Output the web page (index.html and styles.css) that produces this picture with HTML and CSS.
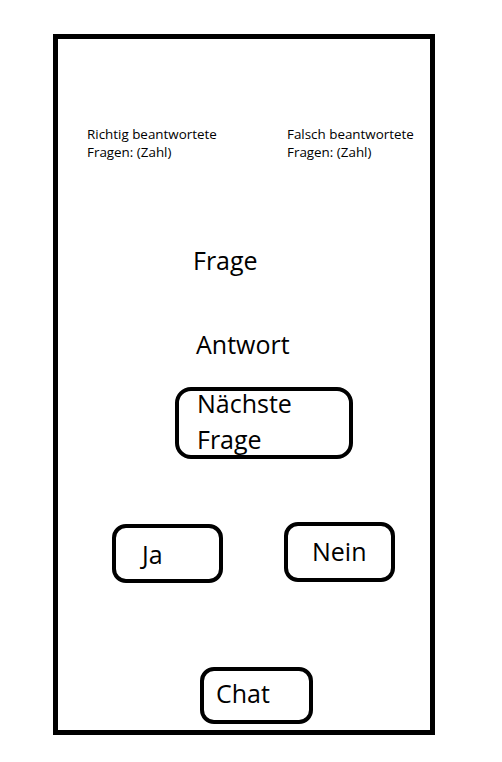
FILE: index.html
```html
<!DOCTYPE html>
<html lang="de">
<head>
    <meta charset="UTF-8">
    <meta name="viewport" content="width=device-width, initial-scale=1.0">
    <title>Quiz</title>
    <link rel="stylesheet" href="styles.css">
</head>
<body>
    <div class="phone">
        <div class="stats">
            <div class="stat">Richtig beantwortete<br>Fragen: (Zahl)</div>
            <div class="stat">Falsch beantwortete<br>Fragen: (Zahl)</div>
        </div>

        <div class="question">Frage</div>
        <div class="answer">Antwort</div>

        <button class="btn btn-next"><span>Nächste<br>Frage</span></button>

        <div class="choices">
            <button class="btn btn-yes">Ja</button>
            <button class="btn btn-no">Nein</button>
        </div>

        <button class="btn btn-chat">Chat</button>
    </div>
</body>
</html>
```

FILE: styles.css
```css
:root {
    --ink: #000;
    --paper: #fff;
}

* {
    box-sizing: border-box;
}

body {
    margin: 0;
    background: var(--paper);
    font-family: 'Open Sans', 'Noto Sans', sans-serif;
    color: var(--ink);
}

.phone {
    margin: 34px 0 0 53px;
    width: 382px;
    height: 701px;
    border: 5px solid var(--ink);
    display: flex;
    flex-direction: column;
    align-items: flex-start;
}

.stats {
    margin-top: 86px;
    padding-left: 29px;
    display: grid;
    grid-template-columns: 200px auto;
    font-size: 13.4px;
    line-height: 18px;
}

.question,
.answer {
    font-size: 25px;
    line-height: 34px;
}

.question {
    margin: 82px 0 0 135px;
}

.answer {
    margin: 50px 0 0 138px;
}

.btn {
    display: flex;
    align-items: flex-start;
    font-family: inherit;
    font-size: 25px;
    line-height: 34px;
    color: var(--ink);
    background: var(--paper);
    border: 4px solid var(--ink);
    border-radius: 14px;
    text-align: left;
    padding: 0;
    margin: 0;
}

.btn-next {
    margin: 26px 0 0 117px;
    width: 178px;
    height: 72px;
    border-radius: 16px;
    padding-left: 18px;
    line-height: 36px;
    overflow: visible;
}

.btn-next span {
    display: block;
    margin-top: -6px;
}

.choices {
    margin: 63px 0 0 54px;
    display: flex;
    align-items: flex-start;
    gap: 61px;
}

.btn-yes {
    margin-top: 2px;
    width: 111px;
    height: 59px;
    padding: 9px 0 0 26px;
}

.btn-no {
    width: 111px;
    height: 60px;
    padding: 8px 0 0 24px;
}

.btn-chat {
    margin: 84px 0 0 142px;
    width: 113px;
    height: 57px;
    padding: 5px 0 0 12px;
}
```
